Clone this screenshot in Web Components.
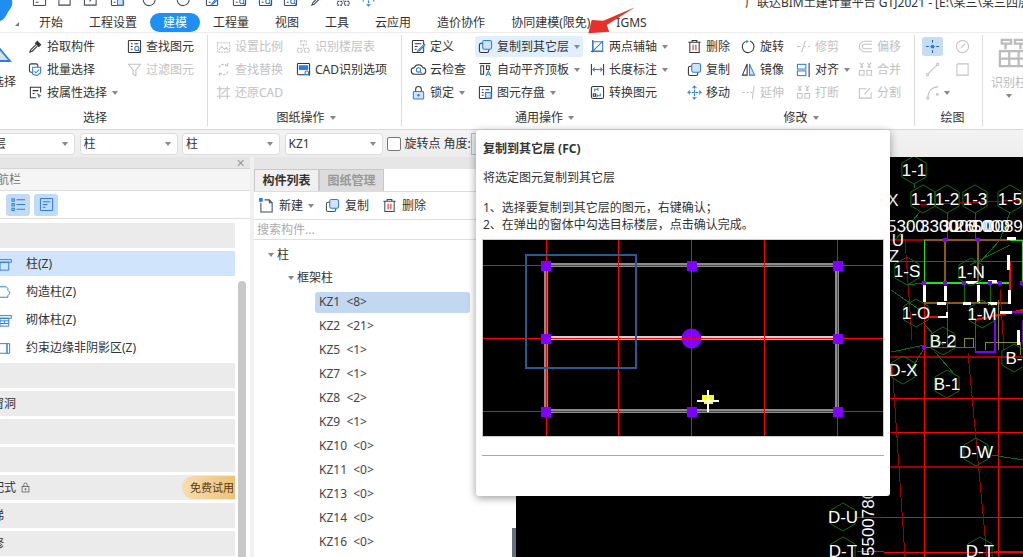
<!DOCTYPE html>
<html lang="zh">
<head>
<meta charset="utf-8">
<title>GTJ2021</title>
<style>
  html, body { margin: 0; height: 100%; overflow: hidden; background: #fff; }
  body { font: 12px/16px "Noto Sans", "Noto Sans CJK SC", sans-serif; color: #333; }
</style>
</head>
<body>
<gtj-app></gtj-app>

<script>
const ICONS = {
  pick: '<path d="M10 2.5l3.5 3.5-2 2L8 4.5z" fill="currentColor"/><path d="M8.5 6L3 11.5 2 14l2.5-1L10 7.5"/>',
  batch: '<rect x="1.5" y="2" width="9" height="9" rx="2"/><path d="M5 5.5h8.5v6l-4 3-4.5-1.5z" fill="#fff" stroke="var(--b)"/><path d="M7 10l1.5 1.5L12 8" stroke="var(--b)"/>',
  attr: '<path d="M13.5 8V2.5h-11v11h6"/><path d="M5 6h6M5 9h2" /><path d="M9.5 8.5l5 3-2 .8-.8 2.2z" fill="var(--b)" stroke="none"/>',
  find: '<rect x="1.5" y="1.5" width="13" height="13" rx="1"/><path d="M4 5h2M8 5h4M4 8h2M4 11h2"/><circle cx="10.5" cy="10" r="2.2" stroke="var(--b)"/><path d="M12 11.7l2 2" stroke="var(--b)"/>',
  filter: '<path d="M1.5 2.5h13l-5 6v6l-3-1.5V8.500z"/>',
  scale: '<path d="M1.500 4h13v10h-13z" stroke-dasharray="2 1"/><path d="M3 12l3-4 3 3 2-2 2 3"/>',
  layer: '<path d="M5 2h6v4H5zM1.500 10h5v4h-5zM9 10h5v4H9zM8 6v4" stroke-dasharray="2 1"/>',
  replace: '<path d="M3 6a5.500 5.500 0 0 1 9-2M13 10a5.500 5.500 0 0 1-9 2" stroke-dasharray="3 1"/><path d="M12.500 1v3h-3M3.500 15v-3h3"/>',
  cad: '<rect x="1.500" y="1.500" width="13" height="12" rx="1"/><rect x="3" y="3.500" width="10" height="5" fill="var(--b)" stroke="none"/><circle cx="11.500" cy="11.500" r="2" fill="#fff" stroke="var(--b)"/><path d="M13 13l1.800 1.800" stroke="var(--b)"/>',
  restore: '<path d="M4 1v14M1 4h14M12 1v14M1 12h14"/><path d="M6 10l5-5" />',
  define: '<rect x="1.500" y="1.500" width="12" height="13" rx="1"/><path d="M4 5h7M4 8h3M4 11h2"/><path d="M8 11.500L14 5.500l1 1-6 6-2 .500z" fill="#fff" stroke="var(--b)"/>',
  cloud: '<path d="M4 13a3.500 3.500 0 0 1-.5-7A4.800 4.800 0 0 1 12.500 6 3.500 3.500 0 0 1 12 13z"/><circle cx="8" cy="8.500" r="2.300" stroke="var(--b)"/><path d="M9.700 10.200l1.800 1.800" stroke="var(--b)"/>',
  lock: '<path d="M5 7V4.500a3 3 0 0 1 6 0V7"/><rect x="2.500" y="7" width="11" height="8" rx="1" fill="#cfe2f8" stroke="var(--b)"/><circle cx="8" cy="11" r="1.300" fill="var(--b)" stroke="none"/>',
  copy: '<rect x="1.500" y="4.500" width="10" height="10" rx="2"/><rect x="5" y="1.500" width="9.500" height="9.500" rx="2" fill="#cfe2f8" stroke="var(--b)"/>',
  aligntop: '<path d="M1.500 1.500h12M3 4h3v9H3zM9 4h3v4H9z"/><path d="M8.500 15l2.500-5.500 2.500 5.500M9.500 13h3" stroke="var(--b)"/>',
  save: '<rect x="1.500" y="1.500" width="13" height="13" rx="1"/><path d="M4 5h2M8 5h4M4 8h2M4 11h2"/><rect x="8" y="8" width="6" height="6" fill="#cfe2f8" stroke="var(--b)"/>',
  axis: '<path d="M3 1v13M1 13h13" stroke="#333"/><path d="M3 3h10.500v10H3zM2 14L14 2" stroke="var(--b)"/>',
  dim: '<path d="M1.500 2v12M14.500 2v12"/><path d="M3 8h10M5 6L3 8l2 2M11 6l2 2-2 2" stroke="var(--b)"/>',
  convert: '<rect x="1.500" y="1.500" width="13" height="13" rx="2"/><path d="M5 7V4.500h3M9 3l-1 1.500L9 6M11 9v2.500H8M7 13l1-1.500L7 10" stroke="var(--b)"/><rect x="3.500" y="9.500" width="2.500" height="2.500"/>',
  del: '<path d="M1.500 3.500h13M5.500 3.500V1.500h5v2M3 3.500v11h10v-11"/><path d="M6.500 6v6M9.500 6v6" stroke="#e02020"/>',
  rotate: '<path d="M9.500 2.200A6.300 6.300 0 1 1 5 2.500"/><path d="M5.500 1l3 1.500-3 2z" fill="var(--b)" stroke="none"/>',
  mirror: '<path d="M6.500 2L1.500 14h5z"/><path d="M9 2l5.500 12H9z" fill="#cfe2f8" stroke="var(--b)"/>',
  move: '<path d="M8 1v14M1 8h14M6 3l2-2 2 2M6 13l2 2 2-2M3 6L1 8l2 2M13 6l2 2-2 2" stroke="var(--b)" stroke-dasharray="3 1"/>',
  align: '<rect x="1.500" y="2.500" width="9" height="5" stroke="var(--b)"/><rect x="1.500" y="9.500" width="9" height="5" stroke="var(--b)"/><path d="M14 1v15"/>',
  trim: '<path d="M1 8h4M8 8h2M13 8h2M10 2L6 14"/>',
  extend: '<path d="M1 8h3M6 8h2M10 8h2M14 1l-2 14"/>',
  offset: '<path d="M15 2.500H7a5.500 5.500 0 0 0 0 11h8M15 5.500H7a2.500 2.500 0 0 0 0 5h8"/>',
  merge: '<circle cx="4" cy="5" r="1"/><circle cx="12" cy="5" r="1"/><rect x="1.500" y="9" width="5" height="5"/><rect x="9.500" y="9" width="5" height="5"/><path d="M2 1l2 2 2-2M10 1l2 2 2-2"/>',
  split: '<path d="M14 8v6H1.500V4H9M7 10l6-7"/>',
  point: '<path d="M1 8h3M6 8h4M12 8h3M8 1v3M8 12v3" stroke="#1e5fb0"/><circle cx="8" cy="8" r="2" fill="var(--b)" stroke="none"/>',
  gauge: '<circle cx="8" cy="8" r="6.500"/><path d="M6.500 9.500L11 5"/>',
  line: '<path d="M3 13L13 3"/><circle cx="2.500" cy="13.500" r="1.200"/><circle cx="13.500" cy="2.500" r="1.200"/>',
  box: '<path d="M3 2h11v12H2V3z"/>',
  curve: '<path d="M2 14C2 6 7 2 13 2"/><circle cx="2" cy="14" r="1.200"/><circle cx="12" cy="10" r="1"/>',
  list: '<path d="M6 3h9M6 8h9M6 13h9"/><rect x="1" y="2" width="2.500" height="2.500"/><rect x="1" y="7" width="2.500" height="2.500"/><rect x="1" y="12" width="2.500" height="2.500"/>',
  detail: '<rect x="1.500" y="1.500" width="13" height="13" rx="1"/><path d="M4 5h8M4 8h5M4 11h3"/>',
  newdoc: '<path d="M2 5v10h12V5l-3-3H6"/><path d="M11 2v3h3"/><rect x="0" y="0" width="4" height="4" fill="var(--b)" stroke="none"/>',
  column: '<path d="M-2 3h15v3H-2zM0 6h10v9H0z"/>',
  gzz: '<path d="M-2 2h9l2 2v2l2 2v2l-2 2v2H-2z"/>',
  qtz: '<path d="M-2 3h15v3H-2zM0 6h10v9H0zM0 9h10M0 12h10M5 9v3"/>',
  ysbj: '<path d="M-2 3h10v11H-2zM8 3h3v11H8z"/>',
  padlock: '<path d="M5.500 7V4a2.500 2.500 0 0 1 5 0v3"/><rect x="3" y="6.500" width="10" height="8"/><circle cx="8" cy="10.500" r="1"/>',
  tri: '<path d="M-8 14L4 2l10 12z" fill="#cfe2f8" stroke="var(--b)" stroke-width="1.800"/>',
  recog: '<path d="M2 1h5v2H2zM9 1h5v2H9zM4 3v3M12 3v3M1 7h14v8H1zM6 7v8M11 7v8M1 11h14" stroke-width="1.200"/>'
};

class GtjIcon extends HTMLElement {
  connectedCallback() {
    const size = this.getAttribute('size') || 16;
    this.attachShadow({ mode: 'open' }).innerHTML = `
      <style>
        :host { display: inline-flex; flex: none; width: ${size}px; height: ${size}px; }
        svg { display: block; overflow: visible; }
      </style>
      <svg width="${size}" height="${size}" viewBox="0 0 16 16" fill="none" stroke="currentColor" stroke-width="1.100">${ICONS[this.getAttribute('name')] || ''}</svg>`;
  }
}
customElements.define('gtj-icon', GtjIcon);

class GtjCaret extends HTMLElement {
  connectedCallback() {
    this.attachShadow({ mode: 'open' }).innerHTML = `
      <style>
        :host { display: inline-block; flex: none; width: 0; height: 0; margin-left: 5px;
                border: 3.500px solid transparent; border-top: 4px solid #888; border-bottom: 0; }
      </style>`;
  }
}
customElements.define('gtj-caret', GtjCaret);

class RibbonItem extends HTMLElement {
  connectedCallback() {
    const icon = this.getAttribute('icon');
    this.attachShadow({ mode: 'open' }).innerHTML = `
      <style>
        :host { display: flex; align-items: center; height: 23px; white-space: nowrap; color: #333; --b: #2b7de0; }
        :host([disabled]) { color: #c2c2c2; --b: #c2c2c2; }
        :host([active]) { background: #e1eefc; border-radius: 3px; height: 21px; margin: 1px 7px 1px -3px; padding-left: 3px; }
        .box { width: 19px; flex: none; display: flex; }
      </style>
      <span class="box"><gtj-icon name="${icon}" size="15"></gtj-icon></span>
      <slot></slot>
      ${this.hasAttribute('caret') ? '<gtj-caret></gtj-caret>' : ''}`;
  }
}
customElements.define('ribbon-item', RibbonItem);

class RibbonGroup extends HTMLElement {
  connectedCallback() {
    const label = this.getAttribute('label');
    this.attachShadow({ mode: 'open' }).innerHTML = `
      <style>
        :host { display: flex; flex-direction: column; flex: none; position: relative; box-sizing: border-box;
                padding-top: 2px; }
        :host(:not([nosep]))::after { content: ""; position: absolute; right: 0; top: 2px; bottom: 3px; width: 1px; background: #dcdcdc; }
        .body { display: grid; grid-auto-flow: column; grid-template-rows: repeat(3, 23px);
                grid-template-columns: var(--cols); height: 69px; }
        .label { height: 27px; flex: none; display: flex; align-items: center; justify-content: center; color: #333;
                 transform: translateX(var(--shift, 0)); }
      </style>
      <div class="body"><slot></slot></div>
      <div class="label">${label}${this.hasAttribute('caret') ? '<gtj-caret></gtj-caret>' : ''}</div>`;
  }
}
customElements.define('ribbon-group', RibbonGroup);

class BigButton extends HTMLElement {
  connectedCallback() {
    this.attachShadow({ mode: 'open' }).innerHTML = `
      <style>
        :host { display: flex; flex-direction: column; align-items: center; grid-row: 1 / span 3; color: var(--c, #333); }
        .ic { height: 33px; padding-top: var(--pt, 12px); padding-left: var(--pl, 0); box-sizing: border-box; --b: #2b7de0; }
        .t { margin-top: var(--mt, 6px); white-space: nowrap; }
      </style>
      <div class="ic"><gtj-icon name="${this.getAttribute('icon')}" size="${this.getAttribute('size') || 16}"></gtj-icon></div>
      <div class="t"><slot></slot></div>
      ${this.hasAttribute('caret') ? '<gtj-caret style="margin:3px 0 0"></gtj-caret>' : ''}`;
  }
}
customElements.define('big-button', BigButton);

class DrawTool extends HTMLElement {
  connectedCallback() {
    this.attachShadow({ mode: 'open' }).innerHTML = `
      <style>
        :host { display: flex; align-items: center; justify-content: center; height: 19px; margin: 2px 0; width: 21px;
                border-radius: 3px; color: #c2c2c2; --b: #2b7de0; }
        :host([active]) { background: #c5dcf3; color: #1e5fb0; }
      </style>
      <gtj-icon name="${this.getAttribute('icon')}" size="15"></gtj-icon>
      ${this.hasAttribute('caret') ? '<gtj-caret style="margin-left:3px;margin-right:-10px"></gtj-caret>' : ''}`;
  }
}
customElements.define('draw-tool', DrawTool);

class GtjTop extends HTMLElement {
  connectedCallback() {
    const names = ['detail','box','split','save','rotate','rotate','define','find','find','find','pick','layer','move'];
    const gaps = [32,57,83,110,142,176,205,232,258,283,310,336,361];
    let x = 0, html = '';
    names.forEach((n, i) => {
      html += `<gtj-icon name="${n}" size="15" style="margin-left:${gaps[i] - x}px"></gtj-icon>`;
      x = gaps[i] + 15;
    });
    this.attachShadow({ mode: 'open' }).innerHTML = `
      <style>
        :host { display: flex; height: 12px; overflow: hidden; background: #fff; color: #3d4a5c; --b: #2b7de0; position: relative; }
        .icons { display: flex; margin-top: -8px; height: 15px; }
        .title { position: absolute; left: 745px; top: -5px; white-space: nowrap; color: #333; }
      </style>
      <div class="icons">${html}</div>
      <div class="title">广联达BIM土建计量平台 GTJ2021 - [E:\\某三\\某三四层\\</div>`;
  }
}
customElements.define('gtj-top', GtjTop);

class GtjTabs extends HTMLElement {
  connectedCallback() {
    const tabs = ['开始','工程设置','建模','工程量','视图','工具','云应用','造价协作','协同建模(限免)','IGMS'];
    this.attachShadow({ mode: 'open' }).innerHTML = `
      <style>
        :host { display: flex; height: 20px; padding-left: 26px; background: #fff; box-sizing: border-box; align-items: stretch; }
        span { padding: 2px 13px 0; display: flex; align-items: center; white-space: nowrap; color: #333; box-sizing: border-box; }
        .on { background: #1e8ff5; color: #fff; border-radius: 10px; height: 19px; margin-top: 1px; padding-top: 0; }
      </style>
      ${tabs.map(t => `<span class="${t === '建模' ? 'on' : ''}">${t}</span>`).join('')}`;
  }
}
customElements.define('gtj-tabs', GtjTabs);

class GtjRibbon extends HTMLElement {
  connectedCallback() {
    this.attachShadow({ mode: 'open' }).innerHTML = `
      <style>
        :host { display: flex; height: 98px; box-sizing: border-box; background: #fff; border-top: 1px solid #ececec;
                border-bottom: 1px solid #d8d8d8; overflow: hidden; }
      </style>
      <slot></slot>`;
  }
}
customElements.define('gtj-ribbon', GtjRibbon);

class GtjToolbar extends HTMLElement {
  connectedCallback() {
    const sel = (t, w) => `<div class="sel" style="width:${w}px"><span>${t}</span><gtj-caret></gtj-caret></div>`;
    this.attachShadow({ mode: 'open' }).innerHTML = `
      <style>
        :host { display: flex; align-items: center; height: 27px; gap: 4.500px; background: linear-gradient(#f3f3f3, #ededed); margin-left: -22px; white-space: nowrap; }
        .sel { height: 22px; box-sizing: border-box; background: #fff; border: 1px solid #ddd; border-radius: 4px; display: flex;
               align-items: center; justify-content: space-between; padding: 0 6px 0 3px; flex: none; }
        gtj-caret { margin: 0; }
        .chk { width: 14px; height: 14px; box-sizing: border-box; border: 1px solid #777; border-radius: 2px; background: #fff; flex: none; }
        .num { width: 30px; height: 22px; box-sizing: border-box; border: 1px solid #bbb; background: #e8f0fa; margin-left: -4px; flex: none; }
      </style>
      ${sel('首层', 97)}${sel('柱', 98)}${sel('柱', 98)}${sel('KZ1', 98)}
      <span class="chk"></span><span style="margin-left:-1px">旋转点 角度:</span><span class="num"></span>`;
  }
}
customElements.define('gtj-toolbar', GtjToolbar);

class NavRow extends HTMLElement {
  connectedCallback() {
    this.attachShadow({ mode: 'open' }).innerHTML = `
      <style>
        :host { display: flex; align-items: center; height: 25px; white-space: nowrap; position: relative; width: 235px;
                background: #ebebeb; color: #333; --b: #2b7de0; }
        :host([plain]) { background: #fff; }
        :host([on]) { background: #d0e5fb; }
        .ic { width: 26px; flex: none; display: flex; color: var(--b); }
        .t { margin-left: var(--x, 0); padding-top: 1px; }
      </style>
      ${this.getAttribute('icon') ? `<span class="ic"><gtj-icon name="${this.getAttribute('icon')}" size="14"></gtj-icon></span>` : ''}
      <span class="t"><slot></slot></span><slot name="end"></slot>`;
  }
}
customElements.define('nav-row', NavRow);

class NavPanel extends HTMLElement {
  connectedCallback() {
    this.attachShadow({ mode: 'open' }).innerHTML = `
      <style>
        :host { display: flex; flex-direction: column; width: 250px; flex: none; background: #fff; overflow: hidden; position: relative; }
        .hd { height: 11px; background: #e6e6e6; border-bottom: 1px solid #d4d4d4; display: flex; justify-content: flex-end; align-items: center;
              padding-right: 5px; color: #999; font-size: 11px; line-height: 11px; }
        .ti { height: 21px; background: #f5f5f5; border-bottom: 1px solid #ddd; color: #777; display: flex; align-items: center; }
        .ti span { margin-left: -15px; white-space: nowrap; }
        .tools { height: 27px; border-bottom: 1px solid #ddd; display: flex; gap: 4px; align-items: center; padding-left: 6px; color: #2b7de0; --b: #2b7de0; flex: none; }
        .tools b { width: 24px; height: 22px; background: #c2dbf5; border-radius: 3px; display: flex; align-items: center; justify-content: center; }
        .list { display: flex; flex-direction: column; gap: 3px; padding-top: 4px; }
        .bar { position: absolute; left: 238px; top: 124px; bottom: 0; width: 8px; background: #c8c8c8; border-radius: 4px 4px 0 0; }
      </style>
      <div class="hd">✕</div>
      <div class="ti"><span>导航栏</span></div>
      <div class="tools"><b><gtj-icon name="list" size="15"></gtj-icon></b><b><gtj-icon name="detail" size="15"></gtj-icon></b></div>
      <div class="list"><slot></slot></div>
      <div class="bar"></div>`;
  }
}
customElements.define('nav-panel', NavPanel);

class TreeRow extends HTMLElement {
  connectedCallback() {
    this.attachShadow({ mode: 'open' }).innerHTML = `
      <style>
        :host { display: flex; align-items: center; height: 24px; white-space: pre; color: #444; }
        .in { display: flex; align-items: center; width: 155px; height: 21px; margin-left: 61px; padding-left: 4px; box-sizing: border-box; border-radius: 3px; }
        :host([on]) .in { background: #c2d8f0; }
      </style>
      <div class="in"><slot></slot></div>`;
  }
}
customElements.define('tree-row', TreeRow);

class CompPanel extends HTMLElement {
  connectedCallback() {
    this.attachShadow({ mode: 'open' }).innerHTML = `
      <style>
        :host { display: flex; flex-direction: column; width: 258px; flex: none; margin-left: 4px; background: #fff; overflow: hidden; --b: #2b7de0; }
        .hd { height: 12px; background: #e6e6e6; flex: none; }
        .tabs { display: flex; height: 23px; flex: none; border-bottom: 1px solid #ddd; box-sizing: border-box; }
        .tabs span { display: flex; align-items: center; justify-content: center; width: 65px; box-sizing: border-box; border: 1px solid #c8c8c8; border-bottom: 0; }
        .tabs .a { background: #f0f0f0; font-weight: 700; color: #333; }
        .tabs .b { background: #dcdcdc; font-weight: 700; color: #999; }
        .tools { display: flex; align-items: center; height: 28px; flex: none; box-sizing: border-box; border-bottom: 1px solid #e0e0e0; padding-left: 5px; color: #3d4a5c; white-space: nowrap; }
        .tools span { margin-left: 5px; color: #333; }
        .search { height: 20px; flex: none; box-sizing: border-box; border-bottom: 1px solid #e0e0e0; color: #aaa; padding-left: 3px; display: flex; align-items: center; }
        .node { display: flex; align-items: center; color: #333; height: 23px; }
        .node i { width: 0; height: 0; border: 3.500px solid transparent; border-top: 4px solid #888; border-bottom: 0; margin-right: 3px; }
        .tree { padding-top: 3px; }
        .kids { padding-top: 1px; }
      </style>
      <div class="hd"></div>
      <div class="tabs"><span class="a">构件列表</span><span class="b">图纸管理</span></div>
      <div class="tools">
        <gtj-icon name="newdoc" size="15"></gtj-icon><span>新建</span><gtj-caret style="margin:0 0 0 5px"></gtj-caret>
        <gtj-icon name="copy" size="15" style="margin-left:11px"></gtj-icon><span>复制</span>
        <gtj-icon name="del" size="15" style="margin-left:13px"></gtj-icon><span>删除</span>
      </div>
      <div class="search">搜索构件...</div>
      <div class="tree">
        <div class="node" style="padding-left:14px"><i></i>柱</div>
        <div class="node" style="padding-left:34px"><i></i>框架柱</div>
        <div class="kids"><slot></slot></div>
      </div>`;
  }
}
customElements.define('comp-panel', CompPanel);

class CadCanvas extends HTMLElement {
  connectedCallback() {
    const line = (c, w, pts) => `<polyline points="${pts}" fill="none" stroke="${c}" stroke-width="${w}"/>`;
    const R = '#ff0000', D = '#a00000', G = '#0a700a', B = '#8a5a10', W = '#fff', P = '#8000ff', Y = '#8a8a20', L = '#20e020';
    const lines = [
      [R,1,'884,398 1023,398'],[R,1,'884,432 1023,432'],[D,2,'884,357 1023,357'],[D,2,'884,467 1023,467'],[R,1,'884,517 1023,517'],[R,1,'870,517 884,517'],[R,1,'884,552 1023,552'],
      [R,1,'924,240 924,557'],[R,1,'998,357 998,557'],[D,1,'892,363 905,557'],[D,1,'968,353 987,557'],
      [D,2,'890,240 1023,240'],[R,1,'891,261 1023,261'],[D,1,'918,205 1023,200'],[D,1,'905,240 912,340'],
      [B,2,'924,240 1010,240'],[B,2,'945,240 945,283'],[B,2,'978,240 978,283'],[B,2,'924,303 1010,303'],[B,1,'925,347 975,347'],
      [L,1,'924,240 924,283'],[L,2,'924,283 1010,283'],[G,1,'964,283 964,303'],[G,1,'990,283 990,303'],[L,1,'1010,240 1022,240 1022,283'],
      [R,2,'1010,262 1010,303'],[R,1,'947,303 947,347'],[R,1,'975,320 975,352'],[R,2,'924,317 947,317'],[R,2,'975,320 1023,310'],[D,1,'1000,290 1004,350'],
      [Y,1,'964,347 964,338 973,338 973,347'],[Y,1,'985,350 985,342 1020,342 1020,355'],[Y,1,'998,300 998,350'],
      [P,1.500,'975,352 995,352 995,318'],[P,2,'1000,312 1023,312'],[P,2,'1023,320 1023,345'],
      [W,3,'924,284 924,302'],[W,3,'945,286 945,301'],[W,3,'937,303 946,303'],[W,3,'963,303 971,303'],[W,3,'988,303 997,303'],[W,3,'963,282 978,282'],[W,3,'988,281 997,281'],[W,3,'978,285 978,303'],[W,3,'1008,270 1008,255'],[W,3,'1007,238 1016,238'],[W,3,'1009,290 1009,304'],[W,2,'938,317 947,317 947,312'],[W,3,'1000,312 1012,312'],[W,3,'1018,330 1018,345'],
      [G,1,'914,184 914,188'],[G,1,'920,212 895,240'],[G,1,'947,212 947,240'],[G,1,'975,212 975,240'],[G,1,'1010,212 1000,240 980,262'],[G,1,'907,285 923,283'],[G,1,'891,290 920,310'],[G,1,'925,325 943,345'],[G,1,'891,352 925,345'],[G,1,'912,368 925,347'],[G,1,'935,352 955,375'],[G,1,'992,455 1023,460'],
      [G,1,'994,551 1023,552'],[G,1,'857,517 884,517'],[G,1,'857,551 884,551'],[G,1,'970,265 1010,245'],
    ];
    const labels = [
      ['1-1',914,170],['X',893,200,0],['1-1',923,199],['1-2',947,199],['1-3',975,199],['1-5',1010,199],
      ['1-S',907,271],['1-N',971,272],['1-O',916,313],['1-M',982,314],['B-2',943,341],['B-',1014,358],['D-X',903,370],['B-1',947,384],
      ['D-W',976,452],['D-T',980,551],['D-U',843,517],['D-T',843,551]
    ];
    const hex = (x, y, r) => {
      const p = [];
      for (let i = 0; i < 6; i++) {
        const a = Math.PI / 3 * i - Math.PI / 2;
        p.push(`${(x + r * Math.cos(a)).toFixed(1)},${(y + r * Math.sin(a)).toFixed(1)}`);
      }
      return `<polygon points="${p.join(' ')}" fill="none" stroke="${G}"/>`;
    };
    const txt = (t, x, y, a = 'middle') => `<text x="${x}" y="${y + 6}" text-anchor="${a}">${t}</text>`;
    const dots = [[924,283],[945,283],[964,283],[978,240],[990,283],[924,347],[945,240],[1022,283],[1000,283]]
      .map(d => `<rect x="${d[0] - 2}" y="${d[1] - 2}" width="4" height="4" fill="${P}"/>`).join('');
    this.attachShadow({ mode: 'open' }).innerHTML = `
      <style>
        :host { display: block; flex: 1; min-width: 0; background: #000; }
        svg { display: block; }
        polyline { shape-rendering: crispEdges; }
        text { font: 17px "Liberation Sans", sans-serif; fill: #fff; }
      </style>
      <svg width="507" height="400" viewBox="516 157 507 400">
        ${lines.map(l => line(l[0], l[1], l[2])).join('')}
        ${dots}
        ${labels.map(l => (l[3] === 0 ? '' : hex(l[1], l[2], 14))).join('')}
        ${labels.map(l => txt(l[0], l[1], l[2])).join('')}
        ${txt('5300', 887, 226, 'start')}${txt('3300', 920, 226, 'start')}${txt('3000', 940, 226, 'start')}${txt('2600', 955, 226, 'start')}${txt('5000', 972, 226, 'start')}${txt('0089', 985, 226, 'start')}
        ${txt('U', 898, 240)}${txt('Z', 894, 256)}
        <text transform="translate(874 556) rotate(-90)">55007800</text>
      </svg>`;
  }
}
customElements.define('cad-canvas', CadCanvas);

class TipPopup extends HTMLElement {
  connectedCallback() {
    const R = '#ff0000', P = '#8000ff';
    const xs = [63.5, 135.5, 208.5, 281.5, 354.5], ys = [25.5, 98.5, 171.5];
    const squares = [[63,26],[209,26],[355,26],[63,99],[355,99],[63,172],[209,172],[355,172]];
    this.attachShadow({ mode: 'open' }).innerHTML = `
      <style>
        :host { display: block; position: absolute; left: 476px; top: 130px; width: 414px; height: 366px; box-sizing: border-box;
                background: #fff; border-radius: 3px; box-shadow: 0 2px 8px rgba(0,0,0,.4); padding: 0 6px 0 6px; color: #333; z-index: 5; }
        h4 { margin: 0; padding: 11px 0 0 1px; font: 700 12px/16px "Noto Sans", "Noto Sans CJK SC", sans-serif; height: 27px; }
        p { margin: 0; padding-left: 1px; }
        .d { height: 29px; padding-top: 2px; }
        .s { line-height: 17px; }
        .pic { display: block; margin-top: 6px; border: 1px solid #ccc; background: #000; }
        hr { margin: 18px 0 0; border: 0; border-top: 1px solid #aaa; }
      </style>
      <h4>复制到其它层 (FC)</h4>
      <p class="d">将选定图元复制到其它层</p>
      <p class="s">1、选择要复制到其它层的图元，右键确认；</p>
      <p class="s">2、在弹出的窗体中勾选目标楼层，点击确认完成。</p>
      <svg class="pic" width="400" height="196" viewBox="0 0 400 196">
        <rect x="63" y="25" width="291" height="146" fill="none" stroke="#8c8c8c" stroke-width="4"/>
        <path d="M63 98H354" stroke="#d0d0d0" stroke-width="4"/>
        ${xs.map(x => `<path d="M${x} 0V196" stroke="${R}"/>`).join('')}
        ${ys.map(y => `<path d="M0 ${y}H400" stroke="${R}"/>`).join('')}
        <rect x="43" y="15" width="110" height="113" fill="none" stroke="#2a5a93" stroke-width="2"/>
        ${squares.map(s => `<rect x="${s[0] - 5}" y="${s[1] - 5}" width="10" height="10" fill="${P}"/>`).join('')}
        <circle cx="208.500" cy="98.500" r="10" fill="${P}"/>
        <path d="M198 98.500H219M208.500 88V109" stroke="${R}"/>
        <path d="M219 155h5v5h-5zM226 155h5v5h-5z" fill="#ff0"/><path d="M221 164h3v-2h-3zM226 162h4v2h-4z" fill="#ff0"/>
        <path d="M225 150V172M214 161H236" stroke="#fff" stroke-width="2"/>
      </svg>
      <hr>`;
  }
}
customElements.define('tip-popup', TipPopup);

class GtjApp extends HTMLElement {
  connectedCallback() {
    const kz = [['KZ1','8'],['KZ2','21'],['KZ5','1'],['KZ7','1'],['KZ8','2'],['KZ9','1'],['KZ10','0'],['KZ11','0'],['KZ13','0'],['KZ14','0'],['KZ16','0']];
    this.attachShadow({ mode: 'open' }).innerHTML = `
      <style>
        :host { display: flex; flex-direction: column; width: 1023px; height: 557px; overflow: hidden; position: relative; background: #fff; }
        .main { display: flex; height: 400px; flex: none; background: #f0f0f0; overflow: hidden; }
        .split { width: 4px; flex: none; background: linear-gradient(#fff 371px, #667080 371px); }
        .logo { position: absolute; left: 0; top: 0; z-index: 2; }
        .arrow { position: absolute; left: 580px; top: 0; z-index: 6; }
        .badge { position: absolute; right: 0; top: 1px; width: 53px; height: 23px; border-radius: 12px 0 0 12px;
                 background: linear-gradient(90deg, #f7ddb0, #eec27a); color: #5a3a10; font-size: 11px; line-height: 23px; padding-left: 8px; box-sizing: border-box; }
        .g1 { width: 218px; margin-left: -10px; --cols: 38px 99px 1fr; --shift: -4px; }
        .g1 big-button { margin-right: 10px; }
        .g2 { width: 194px; padding-left: 8px; --cols: 80px 1fr; --shift: -3px; }
        .g3 { width: 276px; padding-left: 9px; --cols: 67px 112px 1fr; }
        .g4 { width: 237px; padding-left: 9px; --cols: 54px 55px 62px 1fr; }
        .g5 { width: 68px; padding-left: 7px; --cols: 30px 21px; }
        .g6 { width: 60px; padding-left: 4px; --cols: 44px; }
      </style>
      <gtj-top></gtj-top>
      <gtj-tabs></gtj-tabs>
      <gtj-ribbon>
        <ribbon-group class="g1" label="选择">
          <big-button icon="tri">选择</big-button>
          <ribbon-item icon="pick">拾取构件</ribbon-item>
          <ribbon-item icon="batch">批量选择</ribbon-item>
          <ribbon-item icon="attr" caret>按属性选择</ribbon-item>
          <ribbon-item icon="find">查找图元</ribbon-item>
          <ribbon-item icon="filter" disabled>过滤图元</ribbon-item>
        </ribbon-group>
        <ribbon-group class="g2" label="图纸操作" caret>
          <ribbon-item icon="scale" disabled>设置比例</ribbon-item>
          <ribbon-item icon="replace" disabled>查找替换</ribbon-item>
          <ribbon-item icon="restore" disabled>还原CAD</ribbon-item>
          <ribbon-item icon="layer" disabled>识别楼层表</ribbon-item>
          <ribbon-item icon="cad">CAD识别选项</ribbon-item>
        </ribbon-group>
        <ribbon-group class="g3" label="通用操作" caret nosep>
          <ribbon-item icon="define">定义</ribbon-item>
          <ribbon-item icon="cloud">云检查</ribbon-item>
          <ribbon-item icon="lock" caret>锁定</ribbon-item>
          <ribbon-item icon="copy" caret active>复制到其它层</ribbon-item>
          <ribbon-item icon="aligntop" caret>自动平齐顶板</ribbon-item>
          <ribbon-item icon="save" caret>图元存盘</ribbon-item>
          <ribbon-item icon="axis" caret>两点辅轴</ribbon-item>
          <ribbon-item icon="dim" caret>长度标注</ribbon-item>
          <ribbon-item icon="convert">转换图元</ribbon-item>
        </ribbon-group>
        <ribbon-group class="g4" label="修改" caret>
          <ribbon-item icon="del">删除</ribbon-item>
          <ribbon-item icon="copy">复制</ribbon-item>
          <ribbon-item icon="move">移动</ribbon-item>
          <ribbon-item icon="rotate">旋转</ribbon-item>
          <ribbon-item icon="mirror">镜像</ribbon-item>
          <ribbon-item icon="extend" disabled>延伸</ribbon-item>
          <ribbon-item icon="trim" disabled>修剪</ribbon-item>
          <ribbon-item icon="align" caret>对齐</ribbon-item>
          <ribbon-item icon="merge" disabled>打断</ribbon-item>
          <ribbon-item icon="offset" disabled>偏移</ribbon-item>
          <ribbon-item icon="merge" disabled>合并</ribbon-item>
          <ribbon-item icon="split" disabled>分割</ribbon-item>
        </ribbon-group>
        <ribbon-group class="g5" label="绘图">
          <draw-tool icon="point" active></draw-tool>
          <draw-tool icon="line"></draw-tool>
          <draw-tool icon="curve" caret></draw-tool>
          <draw-tool icon="gauge"></draw-tool>
          <draw-tool icon="box"></draw-tool>
        </ribbon-group>
        <ribbon-group class="g6" label="" nosep>
          <big-button icon="recog" size="30" caret style="--c:#bbb;--pt:3px;--pl:8px;--mt:7px">识别柱</big-button>
        </ribbon-group>
      </gtj-ribbon>
      <gtj-toolbar></gtj-toolbar>
      <div class="main">
        <nav-panel>
          <nav-row></nav-row>
          <nav-row on icon="column">柱(Z)</nav-row>
          <nav-row plain icon="gzz">构造柱(Z)</nav-row>
          <nav-row plain icon="qtz">砌体柱(Z)</nav-row>
          <nav-row plain icon="ysbj">约束边缘非阴影区(Z)</nav-row>
          <nav-row></nav-row>
          <nav-row style="--x:-20px">门窗洞</nav-row>
          <nav-row></nav-row>
          <nav-row></nav-row>
          <nav-row style="--x:-20px">装配式<gtj-icon slot="end" name="padlock" size="11" style="margin-left:4px;color:#555"></gtj-icon><span slot="end" class="badge">免费试用</span></nav-row>
          <nav-row style="--x:-20px">楼梯</nav-row>
          <nav-row style="--x:-20px">装修</nav-row>
        </nav-panel>
        <comp-panel>
          ${kz.map((k, i) => `<tree-row ${i === 0 ? 'on' : ''}>${k[0]}  &lt;${k[1]}&gt;</tree-row>`).join('')}
        </comp-panel>
        <div class="split"></div>
        <cad-canvas></cad-canvas>
      </div>
      <tip-popup></tip-popup>
      <svg class="logo" width="24" height="30" viewBox="0 0 24 30">
        <path d="M0 0H12C13 6 11 8 8 12 6 16 4 20 0 21Z" fill="#1f8ef0"/>
        <path d="M15 26l4-4v4z" fill="#777"/>
      </svg>
      <svg class="arrow" width="60" height="40" viewBox="580 0 60 40">
        <polygon points="588.300,33.300 591.700,20 603.300,20.700 635,7.300 606.700,25 609.300,31.700" fill="#e8302a"/>
      </svg>`;
  }
}
customElements.define('gtj-app', GtjApp);
</script>
</body>
</html>
